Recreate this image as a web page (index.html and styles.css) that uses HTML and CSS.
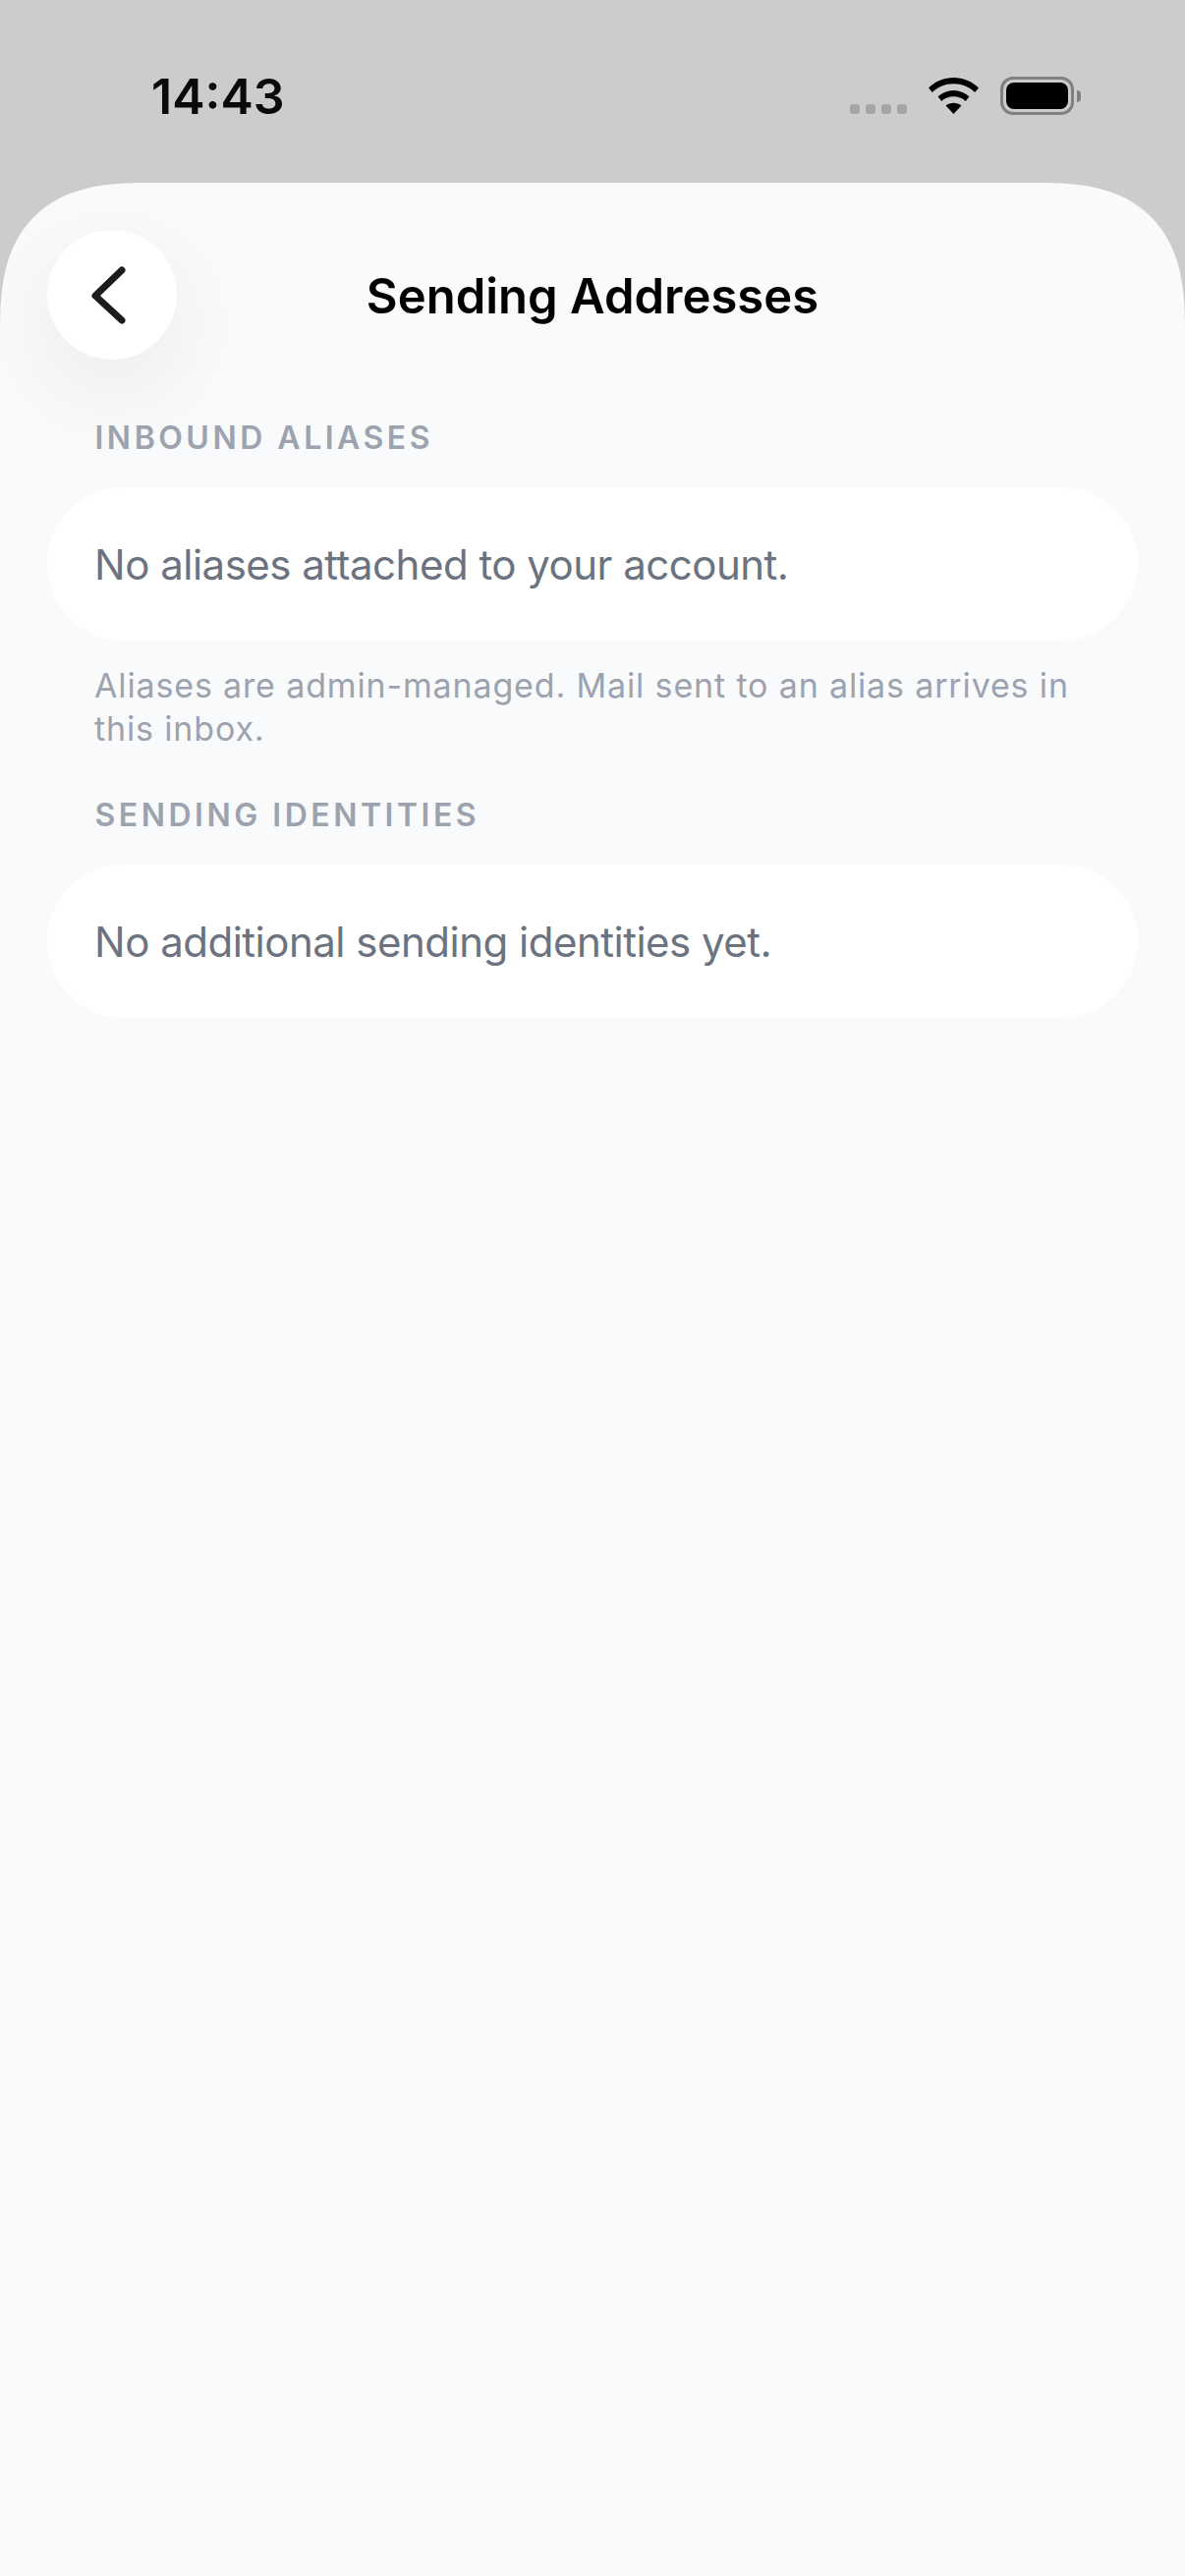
FILE: index.html

```html
<!DOCTYPE html>
<html>
<head>
<meta charset="UTF-8">
<title>Sending Addresses</title>
<link rel="stylesheet" href="styles.css">
</head>
<body>

	<div class="statusbar">
		<div class="time">14:43</div>
		<div class="status-icons">
			<div class="signal"><span></span><span></span><span></span><span></span></div>
			<svg class="wifi" width="51" height="37" viewBox="0 0 51 37">
				<path d="M25.5 0C35 0 44 3.6 51 10.4L47.2 15C41.4 9.4 33.7 6.3 25.5 6.3S9.600 9.400 3.800 15L0 10.400C7 3.600 16 0 25.500 0Z"/>
				<path d="M25.500 13C31.500 13 37.100 15.300 41.500 19.300L37.700 23.900C34.400 20.900 30.100 19.300 25.500 19.300S16.600 20.900 13.300 23.900L9.500 19.300C13.900 15.300 19.500 13 25.500 13Z"/>
				<path d="M25.500 25.800C28.400 25.800 31.200 26.800 33.500 28.600L25.500 37L17.500 28.600C19.800 26.800 22.600 25.800 25.500 25.800Z"/>
			</svg>
			<div class="battery">
				<div class="battery-body"><div class="battery-fill"></div></div>
				<div class="battery-cap"></div>
			</div>
		</div>
	</div>

	<div class="sheet">
		<div class="header">
			<div class="backbtn">
				<svg width="132" height="132" viewBox="0 0 132 132">
					<path d="M76 41L49 67L76 92" fill="none" stroke="#1c1c1e" stroke-width="7" stroke-linecap="round" stroke-linejoin="round"/>
				</svg>
			</div>
			<h1 class="title">Sending Addresses</h1>
			<div class="spacer"></div>
		</div>

		<div class="section">
			<h2 class="label">INBOUND ALIASES</h2>
			<div class="card">No aliases attached to your account.</div>
			<p class="hint">Aliases are admin-managed. Mail sent to an alias arrives in this inbox.</p>
		</div>

		<div class="section">
			<h2 class="label">SENDING IDENTITIES</h2>
			<div class="card">No additional sending identities yet.</div>
		</div>
	</div>

</body>
</html>
```

FILE: styles.css

```css
html, body {
	margin: 0;
	padding: 0;
}

body {
	width: 1206px;
	height: 2622px;
	overflow: hidden;
	background: #cccccc;
	font-family: "Inter", "Liberation Sans", sans-serif;
}

.statusbar {
	height: 186px;
	box-sizing: border-box;
	padding: 68px 106px 0 154px;
	display: flex;
	justify-content: space-between;
	align-items: flex-start;
}

.time {
	font-size: 50px;
	line-height: 60px;
	font-weight: 600;
	color: #0a0a0a;
}

.status-icons {
	display: flex;
	align-items: flex-end;
	padding-top: 10px;
}

.signal {
	display: flex;
	gap: 6px;
	margin-right: 22px;
	margin-bottom: 1px;
}
.signal span {
	width: 10px;
	height: 10px;
	border-radius: 3px;
	background: #a6a6a6;
}

.wifi {
	display: block;
	margin-right: 22px;
	margin-bottom: 1px;
}

.battery {
	display: flex;
	align-items: center;
}
.battery-body {
	width: 75px;
	height: 39px;
	box-sizing: border-box;
	border: 3px solid #808080;
	border-radius: 13px;
	padding: 3px;
}
.battery-fill {
	height: 100%;
	background: #000;
	border-radius: 8px;
}
.battery-cap {
	width: 4px;
	height: 12px;
	margin-left: 3px;
	background: #808080;
	border-radius: 0 6px 6px 0;
}

.sheet {
	height: 2436px;
	box-sizing: border-box;
	padding: 48px 48px 0;
	background: #f9fafc;
	border-radius: 150px 150px 0 0;
	corner-shape: superellipse(1.4);
	overflow: hidden;
}

.header {
	display: flex;
	align-items: center;
	justify-content: space-between;
	margin-bottom: 62px;
}

.backbtn {
	width: 132px;
	height: 132px;
	border-radius: 50%;
	background: #fff;
	box-shadow: 0 30px 100px rgba(0, 0, 0, 0.07);
}
.backbtn svg {
	display: block;
}

.title {
	margin: 4px 0 0;
	font-size: 49px;
	line-height: 60px;
	font-weight: 580;
	color: #000;
}

.spacer {
	width: 132px;
}

.label {
	margin: 0 0 32px;
	padding-left: 48.500px;
	font-size: 32px;
	line-height: 36px;
	font-weight: 600;
	letter-spacing: 3.5px;
	color: #9ca3af;
}

.card {
	height: 156px;
	box-sizing: border-box;
	padding: 0 48px;
	display: flex;
	align-items: center;
	background: #fff;
	border-radius: 78px;
	font-size: 42px;
	font-weight: 380;
	letter-spacing: -0.5px;
	color: #6b7280;
}

.hint {
	margin: 24px 0 0;
	padding: 0 48px;
	font-size: 34px;
	line-height: 43.5px;
	letter-spacing: 0.85px;
	color: #9ca3af;
}

.section + .section {
	margin-top: 49px;
}
```
